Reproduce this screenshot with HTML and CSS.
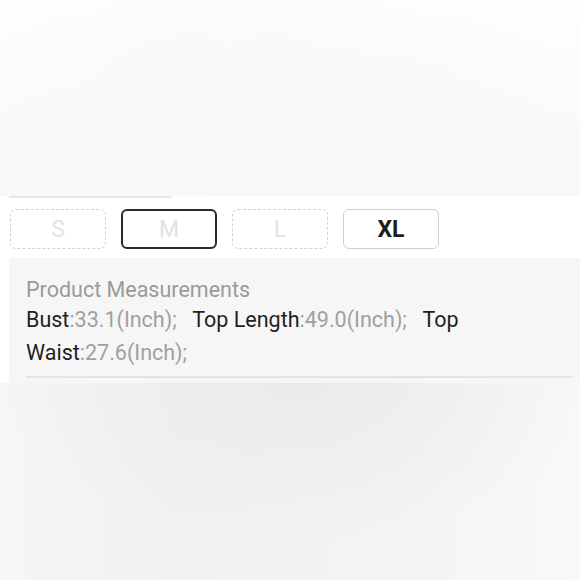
FILE: index.html
```html
<!DOCTYPE html>
<html>
<head>
<meta charset="utf-8">
<link rel="stylesheet" href="styles.css">
</head>
<body>
<div class="hero"></div>
<div class="sheet">
  <div class="tab-line"></div>
  <div class="sizes">
    <div class="size disabled">S</div>
    <div class="size disabled selected">M</div>
    <div class="size disabled">L</div>
    <div class="size available">XL</div>
  </div>
  <div class="measure">
    <div class="measure-title">Product Measurements</div>
    <p class="measure-body"><span class="k">Bust</span>:33.1(Inch);&nbsp;&nbsp; <span class="k">Top Length</span>:49.0(Inch);&nbsp;&nbsp; <span class="k">Top Waist</span>:27.6(Inch);</p>
    <div class="divider"></div>
  </div>
</div>
<div class="footer-blur"></div>
</body>
</html>
```

FILE: styles.css
```css
html, body {
  margin: 0;
  padding: 0;
  background: #ffffff;
  font-family: Roboto, "Liberation Sans", sans-serif;
}
body {
  width: 580px;
  height: 580px;
  overflow: hidden;
}
.hero {
  height: 196px;
  background:
    radial-gradient(ellipse 260px 160px at 320px 120px, #f8f8f8 0%, rgba(248,248,248,0) 100%),
    radial-gradient(ellipse 200px 200px at 160px 140px, #f9f9f9 0%, rgba(249,249,249,0) 100%),
    linear-gradient(180deg, #fefefe 0%, #fafafa 60%, #f8f8f8 100%);
}
.sheet {
  padding-left: 9px;
  background: #ffffff;
}
.tab-line {
  width: 163px;
  height: 2px;
  background: #e6e6e6;
}
.sizes {
  display: flex;
  gap: 15px;
  padding-left: 1px;
  margin-top: 11px;
}
.size {
  box-sizing: border-box;
  width: 96px;
  height: 40px;
  border-radius: 6px;
  display: flex;
  align-items: center;
  justify-content: center;
  font-size: 23px;
}
.size.disabled {
  border: 1.5px dashed #d2d2d2;
  color: #e2e2e2;
}
.size.disabled.selected {
  border: 2px solid #2a2a2a;
}
.size.available {
  border: 1px solid #cfcfcf;
  color: #1e1e1e;
  font-weight: 700;
}
.measure {
  margin-top: 9px;
  background: #f6f6f6;
  padding: 22px 8px 5px 17px;
}
.measure-title {
  font-size: 21.5px;
  line-height: 20px;
  color: #9a9a9a;
}
.measure-body {
  margin: 3px 0 0 0;
  font-size: 21.5px;
  line-height: 33px;
  color: #a0a0a0;
}
.k {
  color: #1f1f1f;
}
.divider {
  margin-top: 7px;
  height: 2px;
  background: #e4e4e4;
}
.footer-blur {
  height: 200px;
  background:
    radial-gradient(ellipse 300px 160px at 300px 0px, #ebebeb 0%, rgba(235,235,235,0) 100%),
    linear-gradient(90deg, #f6f6f6 0%, #f1f1f1 30%, #f4f4f4 70%, #f9f9f9 100%);
}
```
